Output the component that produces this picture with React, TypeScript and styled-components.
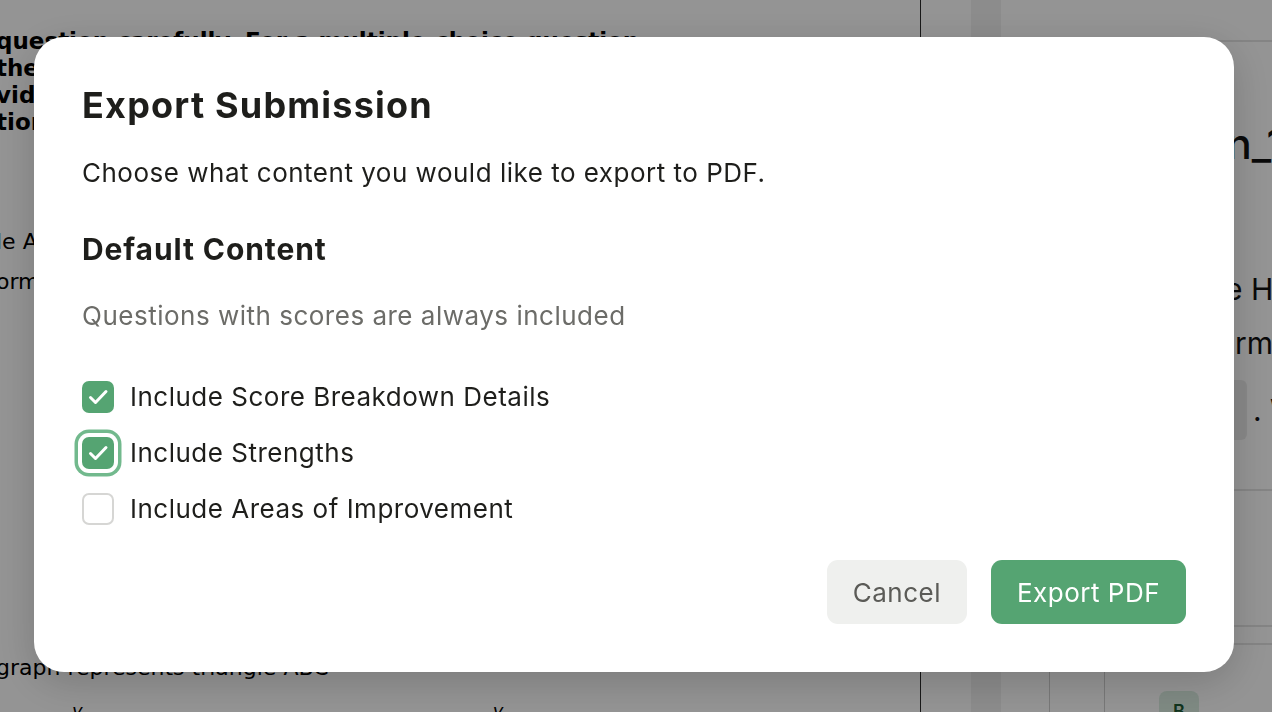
import React, {useState} from 'react';
import styled, {createGlobalStyle} from 'styled-components';

const GlobalStyle = createGlobalStyle`
    html, body {
        margin: 0;
        padding: 0;
        width: 100%;
        height: 100%;
        overflow: hidden;
        background: #ffffff;
    }
    body {
        font-family: Inter, "Noto Sans", "Liberation Sans", sans-serif;
        -webkit-font-smoothing: antialiased;
    }
`;

// Página de fondo (queda oscurecida por el overlay)
const Page = styled.div`
    display: flex;
    width: 1272px;
    height: 712px;
    overflow: hidden;
    background: #ffffff;
`;

const DocColumn = styled.div`
    width: 920px;
    flex-shrink: 0;
    overflow: hidden;
    border-right: 1px solid #2a2a2a;
    display: flex;
    flex-direction: column;
`;

const DocBody = styled.div`
    margin-left: -4px;
    padding-top: 28px;
    font-family: "DejaVu Sans", sans-serif;
    color: #000;
    display: flex;
    flex-direction: column;
    flex: 1;
`;

const BoldLine = styled.div`
    font-weight: 700;
    font-size: 23px;
    line-height: 27px;
    white-space: nowrap;
`;

const PlainLine = styled.div<{ $top?: number }>`
    font-size: 22px;
    line-height: 40px;
    white-space: nowrap;
    margin-top: ${p => p.$top ?? 0}px;
`;

const AxisRow = styled.div`
    display: flex;
    gap: 410px;
    padding-left: 76px;
    margin-top: 12px;
    font-size: 18px;
    font-style: italic;
`;

const Gutter = styled.div`
    width: 80px;
    flex-shrink: 0;
    display: flex;
`;

const GutterBand = styled.div`
    margin-left: 50px;
    width: 30px;
    background: #f1f1f1;
`;

const SidePanel = styled.div`
    flex: 1;
    display: flex;
    flex-direction: column;
    overflow: hidden;
    font-family: Inter, "Liberation Sans", sans-serif;
    color: #111;

    & > * {
        flex-shrink: 0;
    }
`;

const SideTop = styled.div`
    height: 40px;
    border-bottom: 2px solid #e4e4e4;
`;

const SideTitle = styled.div`
    display: flex;
    justify-content: flex-end;
    margin-right: -12px;
    padding-top: 76px;
    font-size: 42px;
    font-weight: 500;
    white-space: nowrap;
`;

const SideText = styled.div<{ $top: number; $indent: number }>`
    padding-left: ${p => p.$indent}px;
    margin-top: ${p => p.$top}px;
    font-size: 30px;
    line-height: 40px;
    white-space: nowrap;
    display: flex;
    align-items: center;
`;

const Chip = styled.span`
    display: inline-block;
    flex-shrink: 0;
    width: 18px;
    height: 60px;
    background: #ececec;
    border-radius: 0 6px 6px 0;
    margin-right: 6px;
`;

const SideDivider = styled.div<{ $top: number }>`
    margin-top: ${p => p.$top}px;
    border-top: 2px solid #e4e4e4;
`;

const SideGrid = styled.div`
    flex: 1;
    display: flex;
    padding-left: 48px;
`;

const GridCol = styled.div`
    width: 54px;
    border-left: 1px solid #cfcfcf;
`;

const Badge = styled.div`
    margin-top: 46px;
    width: 40px;
    height: 40px;
    flex-shrink: 0;
    border-radius: 8px;
    background: #dbeee2;
    color: #1c5a34;
    font-size: 18px;
    font-weight: 600;
    display: flex;
    justify-content: center;
    padding-top: 10px;
    box-sizing: border-box;
`;

// Modal
const Overlay = styled.div`
    position: fixed;
    inset: 0;
    background: rgba(0, 0, 0, 0.42);
    display: flex;
    align-items: flex-start;
    justify-content: flex-start;
    padding: 37px 0 0 34px;
`;

const Dialog = styled.div`
    width: 1200px;
    height: 635px;
    box-sizing: border-box;
    background: #ffffff;
    border-radius: 30px;
    padding: 48px;
    box-shadow: 0 10px 40px rgba(0, 0, 0, 0.18);
    display: flex;
    flex-direction: column;
    color: #1e1e1b;
`;

const Title = styled.h2`
    margin: 0;
    font-size: 36px;
    line-height: 41px;
    font-weight: 700;
    letter-spacing: 1.2px;
`;

const Description = styled.p`
    margin: 32px 0 0;
    font-size: 26px;
    line-height: 30px;
    font-weight: 400;
    letter-spacing: 0.5px;
`;

const SectionTitle = styled.h3`
    margin: 43px 0 0;
    font-size: 30px;
    line-height: 36px;
    font-weight: 700;
    letter-spacing: 0.9px;
`;

const Hint = styled.p`
    margin: 34px 0 0;
    font-size: 26px;
    line-height: 30px;
    letter-spacing: 0.5px;
    color: #6c6c68;
`;

const OptionList = styled.div`
    margin-top: 50px;
    display: flex;
    flex-direction: column;
    gap: 24px;
`;

const OptionRow = styled.label`
    display: flex;
    align-items: center;
    gap: 16px;
    font-size: 26px;
    line-height: 32px;
    letter-spacing: 0.5px;
    cursor: pointer;
`;

const Box = styled.span<{ $checked: boolean; $focused?: boolean }>`
    width: 32px;
    height: 32px;
    flex-shrink: 0;
    box-sizing: border-box;
    border-radius: 7px;
    display: flex;
    align-items: center;
    justify-content: center;
    background: ${p => (p.$checked ? '#55a472' : '#ffffff')};
    border: ${p => (p.$checked ? 'none' : '2px solid #d6d6d4')};
    box-shadow: ${p => (p.$focused ? '0 0 0 4px #ffffff, 0 0 0 7.5px #72b98d' : 'none')};
`;

const Footer = styled.div`
    margin-top: auto;
    display: flex;
    justify-content: flex-end;
    gap: 24px;
`;

const Button = styled.button<{ $primary?: boolean }>`
    height: 64px;
    padding: 0 26px;
    border: none;
    border-radius: 11px;
    font-family: Inter, "Liberation Sans", sans-serif;
    font-size: 26px;
    letter-spacing: 0.5px;
    font-weight: 400;
    cursor: pointer;
    background: ${p => (p.$primary ? '#55a472' : '#eff0ee')};
    color: ${p => (p.$primary ? '#ffffff' : '#5b5b57')};
`;

const CheckMark = () => (
    <svg width="32" height="32" viewBox="0 0 32 32" fill="none" stroke="#fff" strokeWidth={3} strokeLinecap="round" strokeLinejoin="round">
        <path d="M8.5 16.5l5 5L24 10.5" />
    </svg>
);

const options = [
    {id: 'breakdown', label: 'Include Score Breakdown Details'},
    {id: 'strengths', label: 'Include Strengths'},
    {id: 'improvement', label: 'Include Areas of Improvement'},
];

const App: React.FC = () => {
    const [checked, setChecked] = useState<Record<string, boolean>>({
        breakdown: true,
        strengths: true,
        improvement: false,
    });

    const toggle = (id: string) => setChecked(prev => ({...prev, [id]: !prev[id]}));

    return (
        <>
            <GlobalStyle />
            <Page>
                <DocColumn>
                    <DocBody>
                        <BoldLine>question carefully. For a multiple-choice question</BoldLine>
                        <BoldLine>the</BoldLine>
                        <BoldLine>vid</BoldLine>
                        <BoldLine>tion</BoldLine>
                        <PlainLine $top={86}>le A</PlainLine>
                        <PlainLine>orm</PlainLine>
                        <PlainLine $top={346}>graph represents triangle ABC</PlainLine>
                        <AxisRow>
                            <span>y</span>
                            <span>y</span>
                        </AxisRow>
                    </DocBody>
                </DocColumn>
                <Gutter>
                    <GutterBand />
                </Gutter>
                <SidePanel>
                    <SideTop />
                    <SideTitle>n_1</SideTitle>
                    <SideText $top={100} $indent={224}>e Homework</SideText>
                    <SideText $top={14} $indent={234}>rmation</SideText>
                    <SideText $top={17} $indent={228}>
                        <Chip />. Wait
                    </SideText>
                    <SideDivider $top={49} />
                    <SideDivider $top={134} />
                    <SideDivider $top={16} />
                    <SideGrid>
                        <GridCol />
                        <GridCol />
                        <Badge>B</Badge>
                    </SideGrid>
                </SidePanel>
            </Page>

            <Overlay>
                <Dialog role="dialog" aria-labelledby="export-title">
                    <Title id="export-title">Export Submission</Title>
                    <Description>Choose what content you would like to export to PDF.</Description>
                    <SectionTitle>Default Content</SectionTitle>
                    <Hint>Questions with scores are always included</Hint>
                    <OptionList>
                        {options.map(opt => (
                            <OptionRow key={opt.id} onClick={() => toggle(opt.id)}>
                                <Box $checked={checked[opt.id]} $focused={opt.id === 'strengths'}>
                                    {checked[opt.id] && <CheckMark />}
                                </Box>
                                {opt.label}
                            </OptionRow>
                        ))}
                    </OptionList>
                    <Footer>
                        <Button>Cancel</Button>
                        <Button $primary>Export PDF</Button>
                    </Footer>
                </Dialog>
            </Overlay>
        </>
    );
};

export default App;
